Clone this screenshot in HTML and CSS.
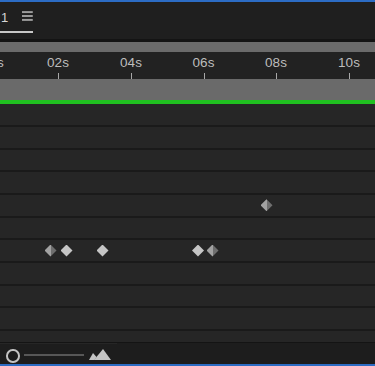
FILE: index.html
```html
<!DOCTYPE html>
<html lang="en">
<head>
  <meta charset="UTF-8">
  <meta name="viewport" content="width=device-width, initial-scale=1.0">
  <title>Timeline</title>
  <link rel="stylesheet" href="styles.css">
</head>
<body>
  <div class="panel">
    <div class="blue-line"></div>
    <div class="header">
      <div class="tab">
        <span class="tab-name">1</span>
        <svg class="menu-icon" width="11" height="10" viewBox="0 0 11 10">
          <rect x="0" y="0" width="11" height="2" fill="#9c9c9c"/>
          <rect x="0" y="4" width="11" height="2" fill="#9c9c9c"/>
          <rect x="0" y="8" width="11" height="2" fill="#9c9c9c"/>
        </svg>
      </div>
    </div>
    <div class="divider"></div>
    <div class="work-bar"></div>
    <div class="ruler">
      <span class="label first">00s</span>
      <span class="label" style="left: 58px">02s</span>
      <span class="label" style="left: 131px">04s</span>
      <span class="label" style="left: 203.5px">06s</span>
      <span class="label" style="left: 276px">08s</span>
      <span class="label" style="left: 349px">10s</span>
      <span class="tick" style="left: 58px"></span>
      <span class="tick" style="left: 131px"></span>
      <span class="tick" style="left: 203.5px"></span>
      <span class="tick" style="left: 276px"></span>
      <span class="tick" style="left: 349px"></span>
    </div>
    <div class="cache-bar"></div>
    <div class="green-line"></div>
    <div class="rows">
      <div class="row"></div>
      <div class="row"></div>
      <div class="row"></div>
      <div class="row"></div>
      <div class="row">
        <span class="key half" style="left: 266.5px"></span>
      </div>
      <div class="row"></div>
      <div class="row">
        <span class="key half" style="left: 50.5px"></span>
        <span class="key" style="left: 66.5px"></span>
        <span class="key" style="left: 102.5px"></span>
        <span class="key" style="left: 198px"></span>
        <span class="key half" style="left: 212.5px"></span>
      </div>
      <div class="row"></div>
      <div class="row"></div>
      <div class="row"></div>
      <div class="row"></div>
    </div>
    <div class="footer">
      <div class="zoom-controls">
        <span class="zoom-out"></span>
        <span class="zoom-slider"></span>
        <svg class="zoom-in" width="22" height="12" viewBox="0 0 22 12">
          <polygon points="0,11 4,4 7.5,8 5.5,11" fill="#c4c4c4"/>
          <polygon points="5,11 14,0 22,11" fill="#c4c4c4"/>
        </svg>
      </div>
    </div>
    <div class="blue-line bottom"></div>
  </div>
</body>
</html>
```

FILE: styles.css
```css
body {
  margin: 0;
  padding: 0;
  background-color: #1d1d1d;
  font-family: "Liberation Sans", Arial, sans-serif;
  overflow: hidden;
}
.panel {
  width: 375px;
  height: 366px;
  display: flex;
  flex-direction: column;
  overflow: hidden;
}
.blue-line {
  height: 2px;
  background-color: #2c6cc4;
  flex-shrink: 0;
}
.blue-line.bottom {
  height: 2.5px;
}
.header {
  height: 37.3px;
  background-color: #1f1f1f;
  display: flex;
  align-items: flex-end;
  flex-shrink: 0;
}
.divider {
  height: 2.4px;
  background-color: #141414;
  flex-shrink: 0;
}
.tab {
  width: 33px;
  height: 20px;
  margin-bottom: 6.6px;
  border-bottom: 2px solid #c8c8c8;
  display: flex;
  align-items: flex-start;
}
.tab-name {
  color: #d6d6d6;
  font-size: 13px;
  line-height: 13px;
  margin-left: 1px;
}
.menu-icon {
  margin-left: 14px;
  margin-top: 0.5px;
}
.work-bar {
  height: 10.3px;
  background-color: #6b6b6b;
  flex-shrink: 0;
}
.ruler {
  position: relative;
  height: 27px;
  background-color: #222222;
  flex-shrink: 0;
}
.label {
  position: absolute;
  top: 3.5px;
  transform: translateX(-50%);
  color: #bdbdbd;
  font-size: 13.5px;
  line-height: 15px;
}
.label.first {
  left: -18px;
  transform: none;
}
.tick {
  position: absolute;
  top: 20.7px;
  width: 1px;
  height: 6.3px;
  background-color: #a8a8a8;
}
.cache-bar {
  height: 21px;
  background-color: #6a6a6a;
  flex-shrink: 0;
}
.green-line {
  height: 4.3px;
  background-color: #20c020;
  flex-shrink: 0;
}
.rows {
  flex: 1;
  overflow: hidden;
  background-color: #1a1a1a;
}
.row {
  position: relative;
  height: 20.67px;
  background-color: #262626;
  border-bottom: 2px solid #1a1a1a;
}
.key {
  position: absolute;
  top: 50%;
  width: 12px;
  height: 12px;
  margin-left: -6px;
  margin-top: -6px;
  background-color: #c6c6c6;
  clip-path: polygon(50% 0, 100% 50%, 50% 100%, 0 50%);
}
.key.half {
  background: linear-gradient(to right, #a2a2a2 0, #a2a2a2 46%, #d0d0d0 46%, #d0d0d0 54%, #6e6e6e 54%, #6e6e6e 100%);
}
.footer {
  height: 21.5px;
  background-color: #1d1d1d;
  border-top: 1px solid #141414;
  box-sizing: border-box;
  flex-shrink: 0;
}
.zoom-controls {
  width: 117px;
  height: 100%;
  box-sizing: border-box;
  border-top: 1px solid #262626;
  display: flex;
  align-items: flex-start;
}
.zoom-out {
  width: 13.5px;
  height: 13.5px;
  box-sizing: border-box;
  border: 2.6px solid #c4c4c4;
  border-radius: 50%;
  margin-left: 6px;
  margin-top: 5px;
}
.zoom-slider {
  width: 60px;
  height: 2px;
  background-color: #575757;
  margin-left: 4.5px;
  margin-top: 10px;
}
.zoom-in {
  margin-left: 5px;
  margin-top: 5px;
}
```
